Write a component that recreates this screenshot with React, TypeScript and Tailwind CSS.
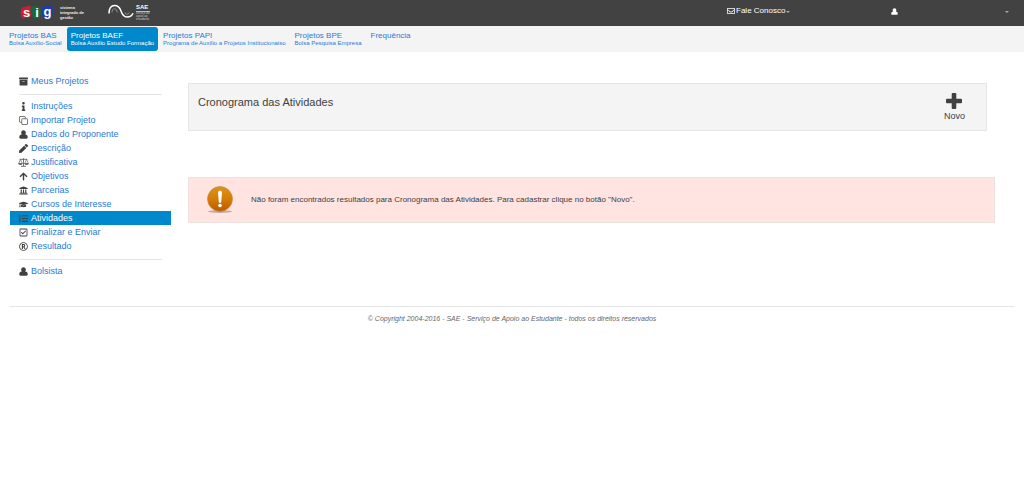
import React from "react";
import {
  FaArchive,
  FaArrowUp,
  FaGraduationCap,
  FaInfo,
  FaListOl,
  FaPen,
  FaRegCheckSquare,
  FaRegEnvelope,
  FaRegRegistered,
  FaUniversity,
} from "react-icons/fa";

type IconProps = { className?: string };
type Item = { label: string; icon: React.ComponentType<IconProps>; active?: boolean };

function UserIcon({ className }: IconProps) {
  return (
    <svg viewBox="0 0 16 16" className={className} fill="currentColor" aria-hidden="true">
      <path d="M8 0.5c2.500 0 4.200 1.800 4.200 4.100 0 1.300-.4 2.600-1.200 3.500C14.200 8.400 15.500 10 15.500 13 15.500 14.800 14.500 15.500 13 15.500H3C1.500 15.500.5 14.800.5 13 .5 10 1.800 8.400 5 8.100 4.200 7.200 3.800 5.900 3.800 4.600 3.800 2.300 5.500.5 8 .5z" />
    </svg>
  );
}

function CloneIcon({ className }: IconProps) {
  return (
    <svg viewBox="0 0 18 18" className={className} fill="none" stroke="currentColor" strokeWidth="1.4" aria-hidden="true">
      <rect x="5.500" y="5.500" width="11.500" height="11.500" rx="1" />
      <path d="M5 12.500H2a1 1 0 0 1-1-1V2a1 1 0 0 1 1-1h9.500a1 1 0 0 1 1 1v3" />
    </svg>
  );
}

function ScaleIcon({ className }: IconProps) {
  return (
    <svg viewBox="0 0 20 16" className={className} fill="none" stroke="currentColor" strokeWidth="1.3" aria-hidden="true">
      <path d="M3 2.200h14M10 .5v14M5.500 15h9" />
      <path d="M4.500 2.500 1 10h7zM15.500 2.500 12 10h7z" strokeWidth="1" />
      <path d="M.5 10h8c-.5 3-7.500 3-8 0zM11.500 10h8c-.5 3-7.500 3-8 0z" fill="currentColor" stroke="none" />
    </svg>
  );
}

function PlusIcon({ className }: IconProps) {
  return (
    <svg viewBox="0 0 16 16" className={className} fill="currentColor" aria-hidden="true">
      <path d="M6.700 0h2.600a1 1 0 0 1 1 1v4.700H15a1 1 0 0 1 1 1v2.600a1 1 0 0 1-1 1h-4.700V15a1 1 0 0 1-1 1H6.700a1 1 0 0 1-1-1v-4.700H1a1 1 0 0 1-1-1V6.700a1 1 0 0 1 1-1h4.700V1a1 1 0 0 1 1-1z" />
    </svg>
  );
}

function Caret() {
  return (
    <svg viewBox="0 0 4 2" className="mt-0.5 h-0.5 w-1 text-[#aaaaaa]" fill="currentColor" aria-hidden="true">
      <path d="M0 0h4L2 2z" />
    </svg>
  );
}

const groups: Item[][] = [
  [{ label: "Meus Projetos", icon: FaArchive }],
  [
    { label: "Instruções", icon: FaInfo },
    { label: "Importar Projeto", icon: CloneIcon },
    { label: "Dados do Proponente", icon: UserIcon },
    { label: "Descrição", icon: FaPen },
    { label: "Justificativa", icon: ScaleIcon },
    { label: "Objetivos", icon: FaArrowUp },
    { label: "Parcerias", icon: FaUniversity },
    { label: "Cursos de Interesse", icon: FaGraduationCap },
    { label: "Atividades", icon: FaListOl, active: true },
    { label: "Finalizar e Enviar", icon: FaRegCheckSquare },
    { label: "Resultado", icon: FaRegRegistered },
  ],
  [{ label: "Bolsista", icon: UserIcon }],
];

const tabs = [
  { title: "Projetos BAS", sub: "Bolsa Auxílio-Social" },
  { title: "Projetos BAEF", sub: "Bolsa Auxílio Estudo Formação", active: true },
  { title: "Projetos PAPI", sub: "Programa de Auxílio a Projetos Institucionaiso" },
  { title: "Projetos BPE", sub: "Bolsa Pesquisa Empresa" },
  { title: "Frequência", sub: "" },
];

function SigLogo() {
  return (
    <a href="#" className="flex items-center gap-1.5 text-white">
      <svg viewBox="0 0 34 16" className="h-4 w-[34px]" role="img" aria-label="sig">
        <path d="M2 3.500 10 1.500c3 2 3 8 0 12l-8 1c-2-4-2-8 0-11z" fill="#c41f35" />
        <path d="M11 3c4-2 9-1 10 3s-1 8-5 9c-4-1-7-7-5-12z" fill="#17683a" />
        <path d="M22 4c4-4 10-4 11 1s-2 9-6 10c-5-1-7-7-5-11z" fill="#1f3da8" />
        <g fill="#fff" fontSize="13" fontWeight="bold" textAnchor="middle">
          <text x="6.500" y="12.500">s</text>
          <text x="17" y="12.500">i</text>
          <text x="27.500" y="11.500">g</text>
        </g>
      </svg>
      <span className="text-[4px] leading-[5px] font-bold text-[#eeeeee]">
        sistema
        <br />
        integrado de
        <br />
        gestão
      </span>
    </a>
  );
}

function SaeLogo() {
  return (
    <a href="#" className="flex items-center gap-0.5 text-white">
      <svg viewBox="0 0 26 16" className="h-4 w-[26px]" fill="none" stroke="currentColor" aria-hidden="true">
        <path d="M1 9.500C.8 4.500 3 1.500 6.500 1.500c4 0 5.500 2.700 6.500 5.500 1.200 3.700 2.800 6 6 6 3 0 5-1.300 6-3.800" strokeWidth="1.500" />
        <path d="M4 8.500c0-2.500.8-3.600 2.500-3.600S9 6.200 9.200 8.500M17 8.500c.3 1.200 1 1.700 2 1.700s1.800-.6 2.200-1.700" strokeWidth="0.800" opacity="0.500" />
      </svg>
      <span className="flex flex-col">
        <span className="border-b border-[#bbbbbb] text-[6px] leading-[7px] font-bold">SAE</span>
        <span className="text-[3px] leading-[3px] text-[#cccccc]">
          serviço de
          <br />
          apoio ao
          <br />
          estudante
        </span>
      </span>
    </a>
  );
}

function WarningIcon() {
  return (
    <svg viewBox="0 0 28 30" className="h-[30px] w-7 shrink-0" role="img" aria-label="Atenção">
      <defs>
        <linearGradient id="orb" x1="0" y1="0" x2="0" y2="1">
          <stop offset="0" stopColor="#dc9418" />
          <stop offset="0.5" stopColor="#d57c06" />
          <stop offset="1" stopColor="#b95a00" />
        </linearGradient>
      </defs>
      <ellipse cx="14" cy="26.6" rx="12" ry="1.4" fill="#a99a98" opacity="0.75" />
      <circle cx="14" cy="14" r="12.4" fill="url(#orb)" stroke="#c98a3c" strokeWidth="0.8" />
      <path d="M12 7.500c0-2.300 4-2.300 4 0l-.8 9.600c-.1 1.200-2.300 1.200-2.400 0z" fill="#fff" />
      <circle cx="14" cy="20.500" r="1.8" fill="#fff" />
    </svg>
  );
}

export default function App() {
  return (
    <div className="bg-white font-['Liberation_Sans',Arial,sans-serif] text-[#404040]">
      <header className="flex h-[26px] items-start bg-[#424242] text-[8px] text-white">
        <div className="flex h-6 w-[71%] items-center gap-6 pl-5">
          <SigLogo />
          <SaeLogo />
        </div>
        <button className="flex h-[22px] w-[16%] items-center gap-px text-left">
          <FaRegEnvelope />
          <span>Fale Conosco</span>
          <Caret />
        </button>
        <button className="flex h-[22px] flex-1 items-center justify-between pr-[15px]" aria-label="Usuário">
          <UserIcon className="size-[7px]" />
          <Caret />
        </button>
      </header>

      <nav className="flex h-[26px] items-start gap-px bg-[#f4f4f4] pt-px pl-[5px]">
        {tabs.map((t) => (
          <a
            key={t.title}
            href="#"
            className={`flex h-6 flex-col rounded-[3px] px-1 pt-1 ${t.active ? "bg-[#0088cc] text-white" : "text-[#2a7ad8]"}`}
          >
            <span className="text-[8px] leading-[9px]">{t.title}</span>
            <span className="text-[6px] leading-[6px]">{t.sub}</span>
          </a>
        ))}
      </nav>

      <div className="flex items-start pt-[22px] pl-2.5">
        <aside className="mr-[17px] w-[161px] shrink-0">
          {groups.map((g, i) => (
            <ul key={i}>
              {i > 0 && <li className="mx-[9px] mt-1.5 mb-1 border-t border-[#e4e4e4]" aria-hidden="true" />}
              {g.map(({ label, icon: Icon, active }) => (
                <li key={label}>
                  <a
                    href="#"
                    className={`flex h-3.5 items-center gap-0.5 pl-2 text-[9px] leading-[14px] ${active ? "bg-[#0088cc] text-white" : "text-[#2a7ad8]"}`}
                  >
                    <span className="flex w-[11px] justify-center">
                      <Icon className="h-[9px] w-auto text-[#404040]" />
                    </span>
                    {label}
                  </a>
                </li>
              ))}
            </ul>
          ))}
        </aside>

        <main className="min-w-0 flex-1 pt-[9px] pr-[29px]">
          <section className="mr-2 flex h-12 items-start justify-between border border-[#e6e6e6] bg-[#f4f4f4] pr-[21px] pl-[9px]">
            <h1 className="pt-[11px] text-[11px] leading-[14px]">Cronograma das Atividades</h1>
            <button className="flex flex-col items-center gap-px pt-[9px]">
              <PlusIcon className="size-4" />
              <span className="text-[9px] leading-3">Novo</span>
            </button>
          </section>
          <section className="mt-[46px] flex h-[46px] items-center gap-[17px] border border-[#eee2e0] bg-[#ffe4e1] pl-[17px]" role="alert">
            <WarningIcon />
            <p className="text-[8px]">
              Não foram encontrados resultados para Cronograma das Atividades. Para cadastrar clique no botão "Novo".
            </p>
          </section>
        </main>
      </div>

      <footer className="mx-2.5 mt-7 border-t border-[#e4e4e4] pt-[7px] text-center text-[7px] leading-[10px] text-[#666666] italic">
        © Copyright 2004-2016 - SAE - Serviço de Apoio ao Estudante - todos os direitos reservados
      </footer>
    </div>
  );
}
